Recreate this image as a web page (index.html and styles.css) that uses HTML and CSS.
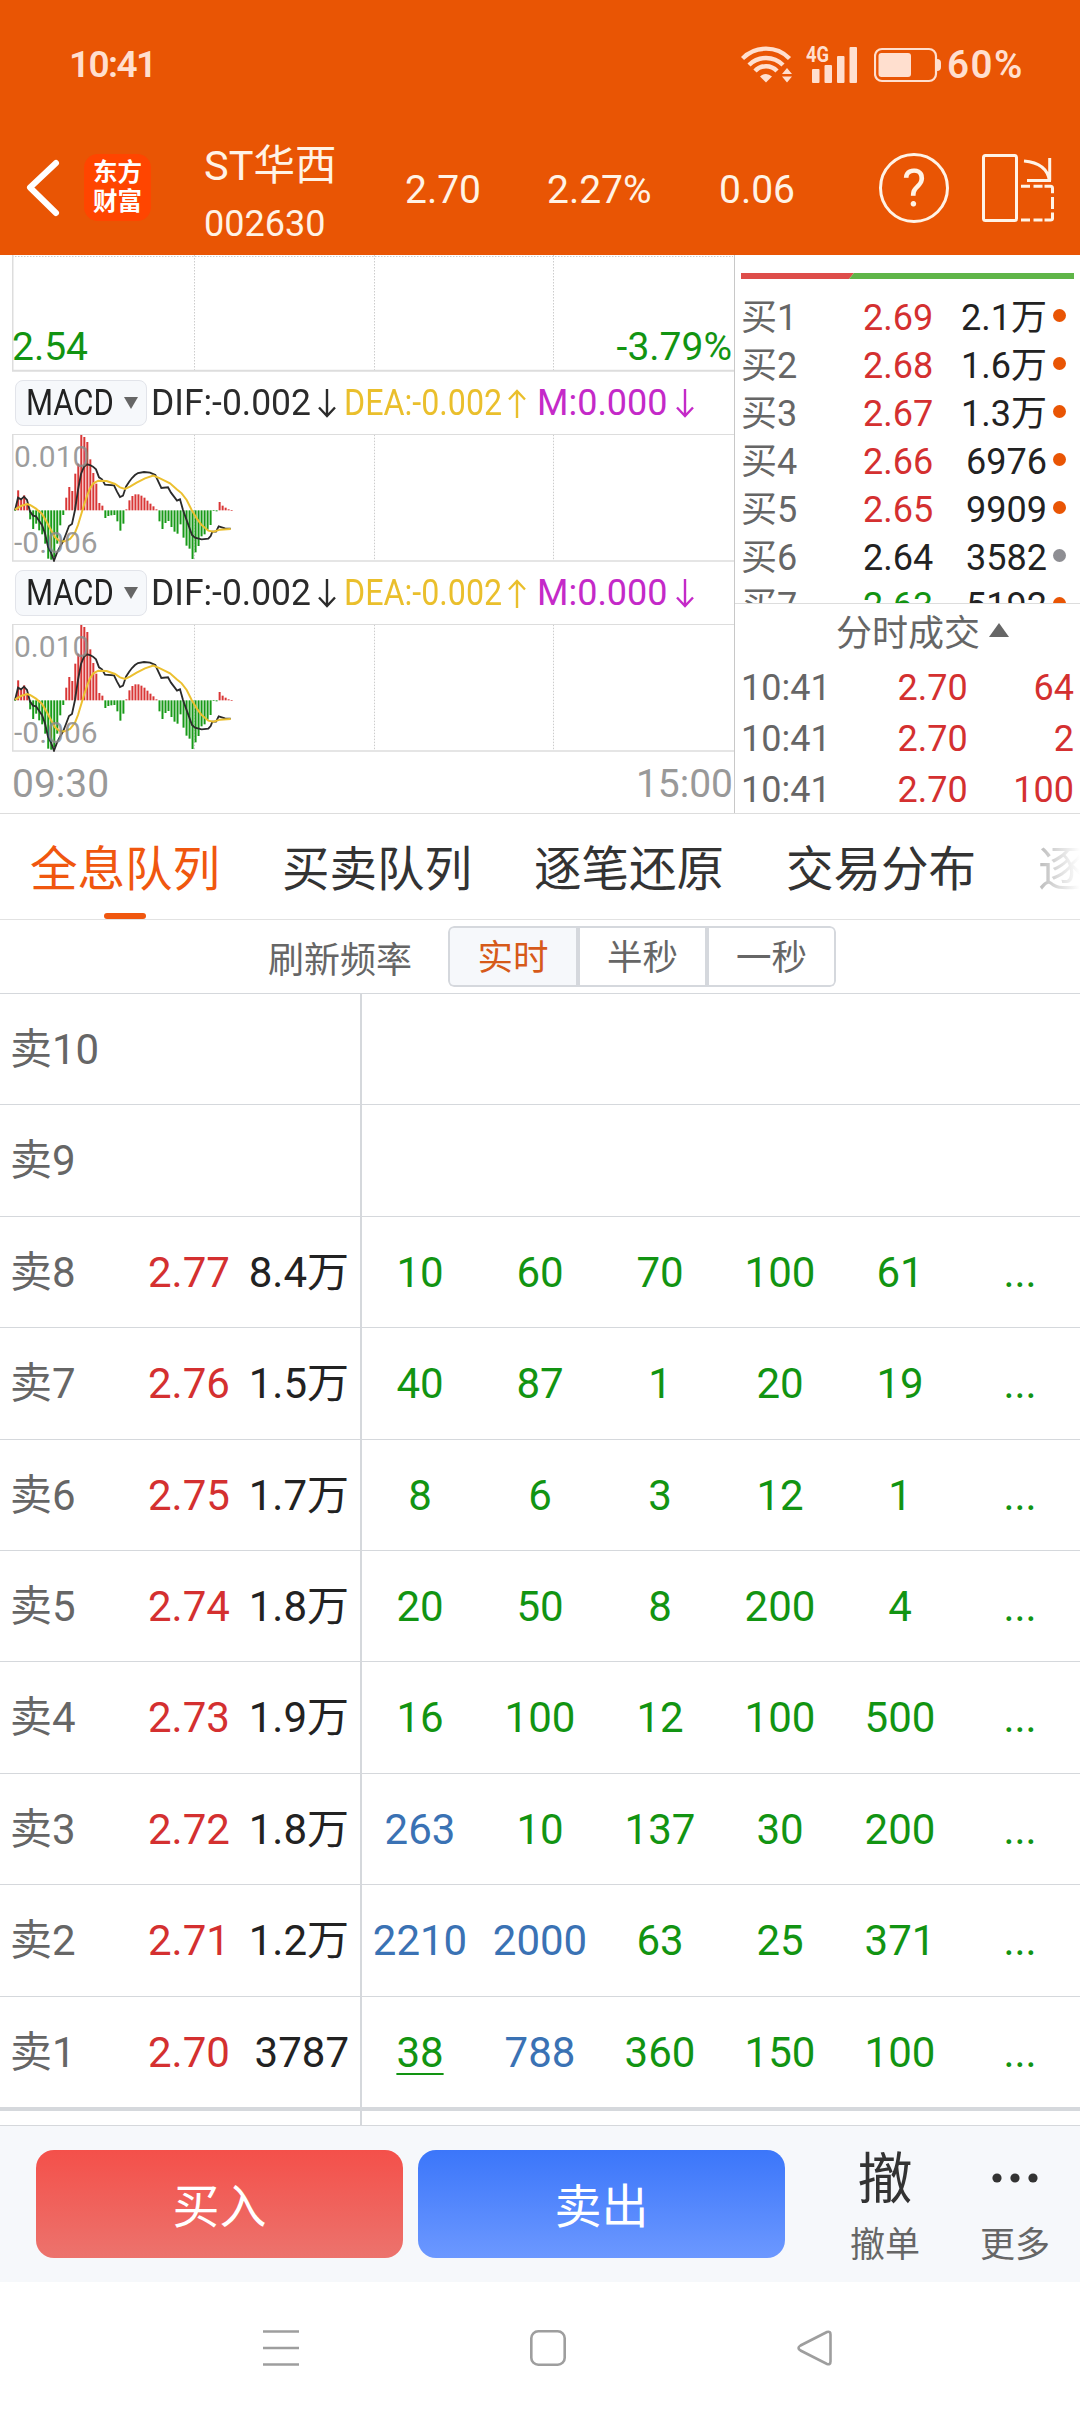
FILE: index.html
```html
<!DOCTYPE html>
<html lang="zh-CN">
<head>
    <meta charset="UTF-8">
    <meta name="viewport" content="width=device-width, initial-scale=1.0">
    <title>ST华西 002630</title>
    <link rel="stylesheet" href="styles.css">
</head>
<body>

<header class="header">
    <div class="status-bar">
        <span class="clock">10:41</span>
        <svg class="wifi" width="52" height="38" viewBox="0 0 52 38" fill="none" stroke="#ffdfcf" stroke-width="4.4">
            <path d="M1.5 13.5a33 33 0 0 1 47 0"/>
            <path d="M8 20a24 24 0 0 1 34 0"/>
            <path d="M14 26a15 15 0 0 1 22 0"/>
            <path d="M19 31.500q6-5 12 0l-6 6z" fill="#ffdfcf" stroke="none"/>
            <path d="M41 29l5-6 5 6zM41 31.500l5 6 5-6z" fill="#ffdfcf" stroke="none"/>
        </svg>
        <svg class="signal" width="52" height="46" viewBox="0 -4 52 46" fill="#ffdfcf">
            <text x="0" y="17" class="net" textLength="23" lengthAdjust="spacingAndGlyphs">4G</text>
            <rect x="6" y="24" width="7.500" height="14" rx="1"/>
            <rect x="18.500" y="20" width="7.500" height="18" rx="1"/>
            <rect x="31" y="11" width="7.500" height="27" rx="1"/>
            <rect x="43.500" y="2" width="7.500" height="36" rx="1"/>
        </svg>
        <svg class="battery" width="68" height="36" viewBox="0 0 68 36" fill="#ffdfcf">
            <rect x="1" y="2" width="61" height="32" rx="7" fill="none" stroke="#ffdfcf" stroke-width="2.200"/>
            <rect x="4.500" y="6" width="32.500" height="24" rx="3"/>
            <path d="M63 12q4 0 4 4v4q0 4-4 4z"/>
        </svg>
        <span class="percent">60%</span>
    </div>
    <div class="nav-bar">
        <svg class="back" width="84" height="60" viewBox="0 0 84 60" fill="none" stroke="#fff" stroke-width="6" stroke-linecap="round" stroke-linejoin="round">
            <path d="M56 5L30 29.500 56 55"/>
        </svg>
        <div class="logo">东方<br>财富</div>
        <div class="stock">
            <div class="stock-name">ST华西</div>
            <div class="stock-code">002630</div>
        </div>
        <div class="quote price">2.70</div>
        <div class="quote rate">2.27%</div>
        <div class="quote change">0.06</div>
        <div class="help">?</div>
        <svg class="rotate" width="76" height="68" viewBox="0 0 76 68" fill="none" stroke="#fff3e6" stroke-width="3">
            <rect x="3.500" y="1.500" width="33" height="65" rx="2"/>
            <path d="M44 7q23 2 25.500 20M69.700 4v22.500M47 26.500h24"/>
            <path d="M41 32.200h9M53.500 32.200h9M64.500 32.200h6q2 0 2 2v5M72.500 43v12M72.500 58.500v6q0 1.500-2 1.500h-6M62.500 66h-9M50 66h-9"/>
        </svg>
    </div>
</header>

<main class="market">
    <section class="charts">
        <svg class="minute" width="722" height="117" viewBox="0 0 722 117">
            <path class="dots" d="M182.500 0v115M362.500 0v115M541.500 0v115M0 1.500h721"/>
            <path class="frame" d="M0.500 0v116M0 115.800h722"/>
            <text x="0" y="105" class="low">2.54</text>
            <text x="720" y="105" class="low" text-anchor="end">-3.79%</text>
        </svg>
        <div class="indicator">
            <div class="picker"><span class="picker-name">MACD</span><i class="caret"></i></div>
            <span class="dif">DIF:-0.002</span>
            <svg class="arrow dif" width="18" height="29" viewBox="0 0 18 29"><path d="M9 0v27M1 18.500l8 8.500 8-8.500"/></svg>
            <span class="dea"><b>DEA:-0.002</b></span>
            <svg class="arrow dea" width="18" height="29" viewBox="0 0 18 29"><path d="M9 29V2M1 10.500l8-8.500 8 8.500"/></svg>
            <span class="macd">M:0.000</span>
            <svg class="arrow macd" width="18" height="29" viewBox="0 0 18 29"><path d="M9 0v27M1 18.500l8 8.500 8-8.500"/></svg>
        </div>
        <svg class="macd-chart" width="722" height="128" viewBox="36 552 2166 384"></svg>
        <div class="indicator">
            <div class="picker"><span class="picker-name">MACD</span><i class="caret"></i></div>
            <span class="dif">DIF:-0.002</span>
            <svg class="arrow dif" width="18" height="29" viewBox="0 0 18 29"><path d="M9 0v27M1 18.500l8 8.500 8-8.500"/></svg>
            <span class="dea"><b>DEA:-0.002</b></span>
            <svg class="arrow dea" width="18" height="29" viewBox="0 0 18 29"><path d="M9 29V2M1 10.500l8-8.500 8 8.500"/></svg>
            <span class="macd">M:0.000</span>
            <svg class="arrow macd" width="18" height="29" viewBox="0 0 18 29"><path d="M9 0v27M1 18.500l8 8.500 8-8.500"/></svg>
        </div>
        <svg class="macd-chart" width="722" height="128" viewBox="36 552 2166 384"></svg>
        <div class="time-axis"><span>09:30</span><span>15:00</span></div>
    </section>

    <section class="book">
        <svg class="ratio" width="333" height="6" viewBox="0 0 333 6">
            <path d="M0 0h113l-5 6H0z" fill="#de4d4a"/>
            <path d="M113 0h220v6H108z" fill="#5fb548"/>
        </svg>
        <div class="bids" id="bids"></div>
        <div class="trades-title">分时成交<i class="up"></i></div>
        <div class="trade"><span>10:41</span><span class="red">2.70</span><span class="red">64</span></div>
        <div class="trade"><span>10:41</span><span class="red">2.70</span><span class="red">2</span></div>
        <div class="trade"><span>10:41</span><span class="red">2.70</span><span class="red">100</span></div>
    </section>
</main>

<nav class="tabs">
    <a class="tab active">全息队列</a>
    <a class="tab">买卖队列</a>
    <a class="tab">逐笔还原</a>
    <a class="tab">交易分布</a>
    <a class="tab faded">逐</a>
</nav>

<div class="refresh">
    <span class="refresh-label">刷新频率</span>
    <div class="segments">
        <button class="segment on">实时</button>
        <button class="segment">半秒</button>
        <button class="segment">一秒</button>
    </div>
</div>

<div class="queue" id="queue"></div>

<footer class="actions">
    <button class="buy">买入</button>
    <button class="sell">卖出</button>
    <div class="action cancel"><span class="action-icon">撤</span><span>撤单</span></div>
    <div class="action more">
        <svg class="action-icon" width="46" height="50" viewBox="0 0 46 50" fill="#333"><circle cx="5" cy="25" r="4.600"/><circle cx="23" cy="25" r="4.600"/><circle cx="41" cy="25" r="4.600"/></svg>
        <span>更多</span>
    </div>
</footer>

<div class="system-nav">
    <svg width="36" height="38" viewBox="0 0 36 38"><path d="M0 2.500h36M0 19h36M0 35.500h36"/></svg>
    <svg width="36" height="38" viewBox="0 0 36 38"><rect x="1.300" y="2.300" width="33.400" height="33.400" rx="7"/></svg>
    <svg width="36" height="38" viewBox="0 0 36 38"><path d="M30 3L3.500 16.500q-4 2.500 0 5L30 35q3.500 1 3.500-2.500v-27Q33.500 2 30 3z"/></svg>
</div>

<script>
    const bids = [
        ['买1', '2.69', '2.1万', 'red', 'hot'],
        ['买2', '2.68', '1.6万', 'red', 'hot'],
        ['买3', '2.67', '1.3万', 'red', 'hot'],
        ['买4', '2.66', '6976', 'red', 'hot'],
        ['买5', '2.65', '9909', 'red', 'hot'],
        ['买6', '2.64', '3582', 'black', 'cold'],
        ['买7', '2.63', '5192', 'green', 'hot']
    ];

    const asks = [
        ['卖10', '', '', []],
        ['卖9', '', '', []],
        ['卖8', '2.77', '8.4万', [10, 60, 70, 100, 61]],
        ['卖7', '2.76', '1.5万', [40, 87, 1, 20, 19]],
        ['卖6', '2.75', '1.7万', [8, 6, 3, 12, 1]],
        ['卖5', '2.74', '1.8万', [20, 50, 8, 200, 4]],
        ['卖4', '2.73', '1.9万', [16, 100, 12, 100, 500]],
        ['卖3', '2.72', '1.8万', [263, 10, 137, 30, 200]],
        ['卖2', '2.71', '1.2万', [2210, 2000, 63, 25, 371]],
        ['卖1', '2.70', '3787', [38, 788, 360, 150, 100]]
    ];
    // big orders are shown in blue
    const bigOrders = [263, 2210, 2000, 788];

    const bars = [0, 60, 35, 45, 20, -27, -56, -40, -60, -72, -100, -145, -148, -140, -100, -45, -14,
        38, 70, 58, 110, 140, 226, 220, 205, 153, 112, 80, 22, 14, -23, -17, -15, -14, -33, -61, -40,
        3, 30, 43, 48, 48, 44, 38, 29, 20, 12, 3, -33, -56, -38, -32, -50, -64, -70, -42, -82, -106,
        -115, -146, -126, -107, -78, -72, -58, -44, -1, -3, 25, 14, 8, 3, 1];
    const dif = '45,781 54,743 63,748 72,740 81,750 90,785 99,797 108,799 117,812 126,825 135,850 144,890 153,908 162,932 171,908 180,890 189,875 198,852 207,828 216,822 225,780 234,720 243,672 252,650 261,643 270,645 279,650 288,658 297,682 306,688 315,704 342,706 351,725 360,741 369,737 378,710 387,696 396,684 405,675 414,669 432,666 450,668 466,675 475,695 484,714 504,712 513,728 531,752 540,748 549,780 558,805 567,830 576,855 585,863 605,868 625,866 632,858 637,845 648,845 656,829 675,835 692,836';
    const dea = '45,779 63,768 81,762 90,765 108,776 126,792 140,815 153,840 165,862 180,874 195,874 210,867 225,848 234,825 243,795 252,765 261,738 270,715 280,700 295,692 320,693 345,702 360,712 375,717 390,710 410,698 435,685 460,677 480,685 510,700 530,718 545,730 560,750 575,780 590,805 605,825 625,842 640,845 660,839 692,837';

    function drawMacd(svg) {
        const zero = 781;
        let html = '<path class="dots wide" d="M583.5 554v376M1123.5 554v376M1660.5 554v376"/>';
        html += '<path class="top" d="M36 553.5h2166"/><path class="frame wide" d="M38 553v381M36 933h2166"/>';
        bars.forEach((v, i) => {
            const y = v > 0 ? zero - v : zero;
            html += `<rect x="${(42.500 + i * 9.020).toFixed(1)}" y="${y}" width="6" height="${Math.max(Math.abs(v), 2)}" fill="${v > 0 ? '#d93636' : '#189a18'}"/>`;
        });
        html += `<polyline class="line-dif" points="${dif}"/><polyline class="line-dea" points="${dea}"/>`;
        html += '<text class="scale" x="42" y="651">0.010</text><text class="scale" x="42" y="908">-0.006</text>';
        svg.innerHTML = html;
    }

    document.querySelectorAll('.macd-chart').forEach(drawMacd);

    document.getElementById('bids').innerHTML = bids.map(b =>
        `<div class="bid"><span class="bid-name">${b[0]}</span><span class="bid-price ${b[3]}">${b[1]}</span><span class="bid-volume">${b[2]}</span><i class="dot ${b[4]}"></i></div>`
    ).join('');

    document.getElementById('queue').innerHTML = asks.map(a => {
        const orders = a[3].map(n => {
            const cls = bigOrders.includes(n) ? 'blue' : 'green';
            return `<span class="${cls}">${n === 38 ? '<u>38</u>' : n}</span>`;
        }).join('');
        return `<div class="row"><div class="level"><span class="level-name">${a[0]}</span><span class="level-price">${a[1]}</span><span class="level-volume">${a[2]}</span></div>` +
            `<div class="orders">${orders}${orders ? '<span class="green">...</span>' : ''}</div></div>`;
    }).join('') + '<div class="row stub"><div class="level"></div><div class="orders"></div></div>';
</script>

</body>
</html>
```

FILE: styles.css
```css
* {
    box-sizing: border-box;
}

body {
    margin: 0;
    width: 1080px;
    height: 2414px;
    overflow: hidden;
    background-color: #fff;
    color: #222;
    font-family: Roboto, "Noto Sans CJK SC", sans-serif;
    font-size: 36px;
}

svg {
    display: block;
    flex: none;
}

button {
    border: none;
    padding: 0;
    margin: 0;
    font-family: inherit;
}

i {
    display: block;
}

.red {
    color: #d43030;
}

.green {
    color: #129412;
}

.blue {
    color: #3a72b4;
}

.black {
    color: #222;
}

/* header */
.header {
    height: 255px;
    background-color: #e95504;
    color: #fff3e6;
}

.status-bar {
    height: 120px;
    padding: 7px 0 0 69px;
    display: flex;
    align-items: center;
    color: #ffdfcf;
    font-weight: 600;
    font-size: 37px;
}

.clock {
    width: 672px;
    padding-top: 1px;
    letter-spacing: -1.6px;
}

.signal {
    margin-left: 13px;
}

.net {
    font-size: 22px;
    font-weight: 700;
}

.battery {
    margin-left: 16px;
    margin-top: 2px;
}

.percent {
    margin-left: 5px;
    padding-top: 2px;
    font-size: 38.5px;
    letter-spacing: 1.5px;
}

.nav-bar {
    height: 135px;
    display: flex;
    align-items: center;
}

.logo {
    width: 67px;
    height: 67px;
    border-radius: 14px;
    background-color: #ff4500;
    color: #fff;
    font-size: 24.5px;
    font-weight: 700;
    line-height: 29px;
    padding-top: 4px;
    text-align: center;
}

.stock {
    margin-left: 53px;
    padding-top: 15px;
    width: 201px;
    line-height: 58px;
}

.stock-name {
    font-size: 41.5px;
}

.quote {
    font-size: 39px;
    padding-top: 5px;
}

.price {
    width: 142px;
}

.rate {
    width: 172px;
}

.change {
    width: 160px;
}

.help {
    width: 70px;
    height: 70px;
    border: 3px solid #fff3e6;
    border-radius: 50%;
    text-align: center;
    font-size: 51px;
    line-height: 66px;
    font-weight: 400;
}

.rotate {
    margin-left: 31px;
}

/* charts */
.market {
    height: 559px;
    display: flex;
    border-bottom: 1px solid #ddd;
    overflow: hidden;
}

.charts {
    width: 735px;
    padding-left: 12px;
    border-right: 1px solid #c8c8c8;
}

.dots {
    fill: none;
    stroke: #ccc;
    stroke-width: 1;
    stroke-dasharray: 1.5 1.5;
}

.dots.wide {
    stroke-width: 3;
    stroke-dasharray: 4.5 4.5;
}

.frame {
    fill: none;
    stroke: #ddd;
    stroke-width: 2;
}

.frame.wide {
    stroke-width: 5;
}

.top {
    stroke: #ddd;
    stroke-width: 3;
}

.low {
    fill: #129412;
    font-size: 39px;
}

.line-dif {
    fill: none;
    stroke: #2b2b2b;
    stroke-width: 5.5;
}

.line-dea {
    fill: none;
    stroke: #ecc030;
    stroke-width: 6;
}

.scale {
    font-size: 90px;
    fill: #8c8c8c;
    fill-opacity: 0.85;
}

.indicator {
    height: 62px;
    padding-left: 3px;
    display: flex;
    align-items: center;
    white-space: nowrap;
}

.picker {
    width: 132px;
    height: 46px;
    margin-right: 4px;
    padding-left: 10px;
    display: flex;
    align-items: center;
    background-color: #f6f8fb;
    border: 1px solid #e2e4ea;
    border-radius: 8px;
}

.picker-name {
    width: 98px;
    transform: scaleX(0.86);
    transform-origin: left;
}

.caret {
    border: 7.5px solid transparent;
    border-top: 12px solid #666;
    border-bottom: none;
}

.indicator .dif {
    color: #2b2b2b;
}

.indicator span.dif {
    width: 167px;
    transform: scaleX(0.985);
    transform-origin: left;
}

.indicator .dea {
    color: #eabf2c;
}

.indicator span.dea {
    width: 164px;
    margin-left: 8px;
}

.dea b {
    display: block;
    font-weight: 400;
    transform: scaleX(0.895);
    transform-origin: left;
}

.indicator .macd {
    color: #c42ac8;
}

.indicator span.macd {
    width: 139px;
    margin-left: 11px;
}

.arrow path {
    fill: none;
    stroke: currentColor;
    stroke-width: 2.4;
}

.time-axis {
    display: flex;
    justify-content: space-between;
    padding: 0 1px 0 0;
    line-height: 64px;
    font-size: 39px;
    color: #999;
}

/* order book */
.book {
    width: 345px;
    padding: 18px 6px 0;
}

.bids {
    height: 310px;
    margin: 15px -6px 0;
    padding: 0 13px 0 6px;
    overflow: hidden;
    border-bottom: 1px solid #ddd;
}

.bid {
    height: 48px;
    line-height: 48px;
    display: flex;
    align-items: center;
}

.bid-name {
    width: 122px;
    color: #666;
}

.bid-price {
    width: 72px;
}

.bid-volume {
    width: 112px;
    text-align: right;
}

.dot {
    width: 13px;
    height: 13px;
    margin: -6px 0 0 6px;
    border-radius: 50%;
}

.hot {
    background-color: #e95504;
}

.cold {
    background-color: #8e8e93;
}

.trades-title {
    height: 59px;
    line-height: 60px;
    padding-left: 95px;
    display: flex;
    align-items: center;
    color: #666;
}

.up {
    margin: -8px 0 0 9px;
    border: 10.5px solid transparent;
    border-bottom: 14px solid #666;
    border-top: none;
}

.trade {
    height: 51px;
    line-height: 51px;
    display: flex;
    color: #666;
}

.trade span:nth-child(2) {
    width: 137px;
    text-align: right;
}

.trade span:nth-child(3) {
    flex: 1;
    text-align: right;
    color: #d43030;
}

/* tabs */
.tabs {
    height: 106px;
    padding: 3px 0 0 30px;
    display: flex;
    gap: 62px;
    border-bottom: 1px solid #e2e2e2;
    overflow: hidden;
}

.tab {
    flex: none;
    display: flex;
    flex-direction: column;
    align-items: center;
    font-size: 47.5px;
    line-height: 106px;
    color: #333;
}

.tab.active {
    color: #f0570f;
}

.tab.active::after {
    content: "";
    width: 42px;
    height: 6px;
    margin-top: -10px;
    border-radius: 3px;
    background-color: #f0570f;
}

.tab.faded {
    background: linear-gradient(to right, #bbb, #fff 42px);
    background-clip: text;
    -webkit-background-clip: text;
    color: transparent;
}

.refresh {
    height: 74px;
    padding-left: 268px;
    display: flex;
    align-items: center;
    border-bottom: 1px solid #d5d8dc;
    color: #666;
}

.segments {
    display: flex;
    margin-left: 36px;
    border-radius: 6px;
    overflow: hidden;
}

.segment {
    width: 129px;
    height: 61px;
    padding-top: 4px;
    border: 2px solid #d5d8dd;
    background-color: #fff;
    color: #666;
    font-size: 35.5px;
    line-height: 53px;
}

.segment:first-child {
    width: 130px;
    border-radius: 6px 0 0 6px;
}

.segment:last-child {
    border-radius: 0 6px 6px 0;
}

.segment.on {
    background-color: #f6f8fb;
    color: #d65a1a;
}

/* queue */
.row {
    display: flex;
    height: 111.4px;
    border-bottom: 1px solid #d5d8dc;
    font-size: 42px;
    line-height: 111px;
}

.row:nth-child(10) {
    height: 114.4px;
    border-bottom: 4px solid #d5d8dc;
}

.row.stub {
    height: 15px;
}

.level {
    width: 362px;
    padding: 0 11px 0 10px;
    display: flex;
    border-right: 2px solid #d5d8dc;
}

.level-name {
    width: 138px;
    color: #666;
}

.level-price {
    color: #d43030;
}

.level-volume {
    flex: 1;
    text-align: right;
}

.orders {
    width: 720px;
    margin-left: -2px;
    display: grid;
    grid-template-columns: repeat(6, 120px);
    text-align: center;
}

.orders u {
    text-decoration-thickness: 2px;
    text-underline-offset: 6px;
    text-decoration-skip-ink: none;
}

/* bottom bar */
.actions {
    height: 156px;
    padding: 24px 0 0 36px;
    display: flex;
    background-color: #f6f8fb;
}

.buy,
.sell {
    width: 367px;
    height: 108px;
    padding-bottom: 3px;
    border-radius: 18px;
    color: #fff;
    font-size: 47px;
}

.buy {
    background: linear-gradient(#f4504a, #ec736d);
}

.sell {
    margin-left: 15px;
    background: linear-gradient(#3b76fa, #6c98ff);
}

.action {
    width: 72px;
    padding-top: 3px;
    display: flex;
    flex-direction: column;
    align-items: center;
    color: #666;
    line-height: 86px;
    font-size: 35px;
}

.cancel {
    margin-left: 64px;
}

.more {
    margin-left: 58px;
}

.action-icon {
    height: 50px;
    line-height: 52px;
    color: #333;
    font-size: 55px;
}

.system-nav {
    height: 132px;
    padding: 47px 247px 0 263px;
    display: flex;
    justify-content: space-between;
    background-color: #fff;
}

.system-nav svg {
    fill: none;
    stroke: #9e9e9e;
    stroke-width: 2.6;
}
```
